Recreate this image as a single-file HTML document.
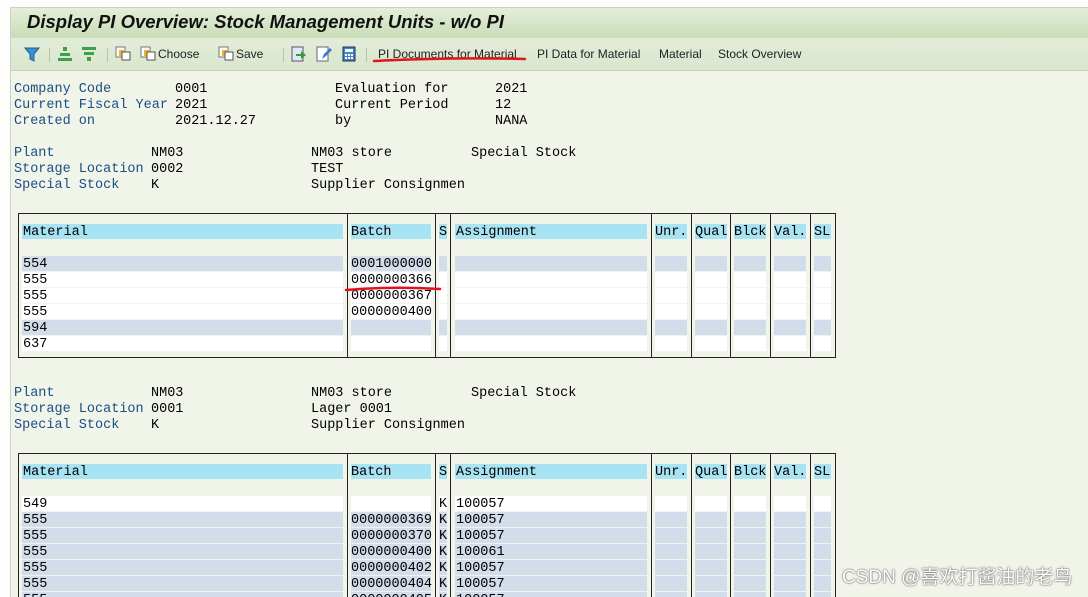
<!DOCTYPE html>
<html><head><meta charset="utf-8">
<style>
*{margin:0;padding:0;box-sizing:border-box}
html,body{width:1088px;height:597px;overflow:hidden}
body{background:#fdfefb;position:relative;font-family:"Liberation Mono",monospace;font-size:13.5px}
.a{position:absolute;white-space:pre;line-height:16px}
.l{color:#1b4d86}
#frame{position:absolute;left:10px;top:7px;width:1078px;height:590px;background:#f1f5e9;border-left:1px solid #c9d3bd;border-top:1px solid #c9d3bd}
#title{position:absolute;left:11px;top:8px;width:1077px;height:30px;background:linear-gradient(#e4eedb,#c9ddb7);font-family:"Liberation Sans",sans-serif;font-weight:bold;font-style:italic;font-size:18.5px;padding:3px 0 0 16px;color:#111}
#tb{position:absolute;left:11px;top:38px;width:1077px;height:33px;background:linear-gradient(#e3ecd9,#d9e6cd);border-bottom:1px solid #c5d0b8;font-family:"Liberation Sans",sans-serif;font-size:12px;color:#222}
#tb span{position:absolute;top:9px}
.sep{position:absolute;top:10px;width:1px;height:14px;background:#b9c4ab}
.tbl{position:absolute;left:18px;width:818px;border:1px solid #222;background:#f1f5e9}
.v{position:absolute;top:0;bottom:0;width:1px;background:#222}
.c{position:absolute;height:15px}
.h{background:#a7e3f2}
.s{background:#d3dcea}
.w{background:#fff}
</style></head><body>
<div id="frame"></div>
<div id="title">Display PI Overview: Stock Management Units - w/o PI</div>
<div id="tb">
<svg style="position:absolute;left:13px;top:8px" width="16" height="16"><path d="M1 2h14l-5 6v7l-4-2V8z" fill="#3b8fd0" stroke="#1f5f9a"/></svg>
<div class="sep" style="left:38px"></div>
<svg style="position:absolute;left:46px;top:8px" width="16" height="16"><rect x="6" y="1" width="4" height="4" fill="#3ea04a"/><rect x="3" y="7" width="10" height="3" fill="#3ea04a"/><rect x="1" y="12" width="14" height="3" fill="#3ea04a"/></svg>
<svg style="position:absolute;left:70px;top:8px" width="16" height="16"><rect x="1" y="1" width="14" height="3" fill="#3ea04a"/><rect x="3" y="6" width="10" height="3" fill="#3ea04a"/><rect x="6" y="11" width="4" height="4" fill="#3ea04a"/></svg>
<div class="sep" style="left:96px"></div>
<svg style="position:absolute;left:104px;top:8px" width="16" height="16"><rect x="1" y="1" width="9" height="10" fill="#fff" stroke="#777"/><rect x="4" y="4" width="6" height="6" fill="#f0b030"/><rect x="7" y="6" width="8" height="8" fill="#fff" stroke="#555"/></svg>
<svg style="position:absolute;left:129px;top:8px" width="16" height="16"><rect x="1" y="1" width="9" height="10" fill="#fff" stroke="#777"/><rect x="4" y="4" width="6" height="6" fill="#f0b030"/><rect x="7" y="6" width="8" height="8" fill="#fff" stroke="#555"/></svg>
<span style="left:147px">Choose</span>
<svg style="position:absolute;left:207px;top:8px" width="16" height="16"><rect x="1" y="1" width="9" height="10" fill="#fff" stroke="#777"/><rect x="4" y="4" width="6" height="6" fill="#f0b030"/><rect x="7" y="6" width="8" height="8" fill="#fff" stroke="#555"/></svg>
<span style="left:225px">Save</span>
<div class="sep" style="left:272px"></div>
<svg style="position:absolute;left:280px;top:8px" width="16" height="16"><rect x="1" y="1" width="11" height="14" fill="#dfe8f4" stroke="#557"/><path d="M5 8h5V5l5 4-5 4v-3H5z" fill="#3a9a3a"/></svg>
<svg style="position:absolute;left:305px;top:8px" width="16" height="16"><rect x="1" y="1" width="11" height="14" fill="#fff" stroke="#667"/><path d="M6 13l2-5 6-6 2 2-6 6z" fill="#3a7ad0"/></svg>
<svg style="position:absolute;left:330px;top:8px" width="16" height="16"><rect x="2" y="1" width="12" height="14" fill="#4a80c8" stroke="#235"/><rect x="4" y="3" width="8" height="3" fill="#dfe"/><g fill="#fff"><rect x="4" y="8" width="2" height="2"/><rect x="7" y="8" width="2" height="2"/><rect x="10" y="8" width="2" height="2"/><rect x="4" y="11" width="2" height="2"/><rect x="7" y="11" width="2" height="2"/><rect x="10" y="11" width="2" height="2"/></g></svg>
<div class="sep" style="left:355px"></div>
<span style="left:367px">PI Documents for Material</span>
<span style="left:526px">PI Data for Material</span>
<span style="left:648px">Material</span>
<span style="left:707px">Stock Overview</span>
</div>
<svg style="position:absolute;left:372px;top:55px" width="160" height="10"><path d="M2 6Q80 2 153 4" stroke="#e0141c" stroke-width="2.5" fill="none" stroke-linecap="round"/></svg>

<div class="a l" style="left:14px;top:82px">Company Code
Current Fiscal Year
Created on</div>
<div class="a" style="left:175px;top:82px">0001
2021
2021.12.27</div>
<div class="a" style="left:335px;top:82px">Evaluation for
Current Period
by</div>
<div class="a" style="left:495px;top:82px">2021
12
NANA</div>

<div class="a l" style="left:14px;top:146px">Plant
Storage Location
Special Stock</div>
<div class="a" style="left:151px;top:146px">NM03
0002
K</div>
<div class="a" style="left:311px;top:146px">NM03 store
TEST
Supplier Consignmen</div>
<div class="a" style="left:471px;top:146px">Special Stock</div>

<div class="a l" style="left:14px;top:386px">Plant
Storage Location
Special Stock</div>
<div class="a" style="left:151px;top:386px">NM03
0001
K</div>
<div class="a" style="left:311px;top:386px">NM03 store
Lager 0001
Supplier Consignmen</div>
<div class="a" style="left:471px;top:386px">Special Stock</div>

<div class="tbl" style="top:213px;height:145px">
<div class="v" style="left:328px"></div><div class="v" style="left:416px"></div><div class="v" style="left:431px"></div><div class="v" style="left:632px"></div><div class="v" style="left:672px"></div><div class="v" style="left:711px"></div><div class="v" style="left:751px"></div><div class="v" style="left:791px"></div>
</div>
<div class="tbl" style="top:453px;height:150px">
<div class="v" style="left:328px"></div><div class="v" style="left:416px"></div><div class="v" style="left:431px"></div><div class="v" style="left:632px"></div><div class="v" style="left:672px"></div><div class="v" style="left:711px"></div><div class="v" style="left:751px"></div><div class="v" style="left:791px"></div>
</div>

<div id="cells"></div>
<script>
var cols=[[22,321],[351,80],[439,8],[455,192],[655,32],[695,32],[734,32],[774,32],[814,17]];
var H=["Material","Batch","S","Assignment","Unr.","Qual","Blck","Val.","SL"];
var out="";
function row(y,cls,vals){cols.forEach(function(c,i){var t=vals?vals[i]||"":"";out+='<div class="c '+cls+'" style="left:'+c[0]+'px;top:'+y+'px;width:'+c[1]+'px"></div>';if(t)out+='<div class="a" style="left:'+(c[0]+(i==0||i==3?1:0))+'px;top:'+(y+1)+'px">'+t+'</div>';});}
row(224,"h",H);
var r1=[["s","554","0001000000"],["w","555","0000000366"],["w","555","0000000367"],["w","555","0000000400"],["s","594",""],["w","637",""]];
r1.forEach(function(r,k){row(256+16*k,r[0],[r[1],r[2]]);});
row(464,"h",H);
var r2=[["w","549","","K","100057"],["s","555","0000000369","K","100057"],["s","555","0000000370","K","100057"],["s","555","0000000400","K","100061"],["s","555","0000000402","K","100057"],["s","555","0000000404","K","100057"],["s","555","0000000405","K","100057"]];
r2.forEach(function(r,k){row(496+16*k,r[0],[r[1],r[2],r[3],r[4]]);});
document.getElementById("cells").innerHTML=out;
</script>
<svg style="position:absolute;left:344px;top:284px" width="100" height="10"><path d="M2 6Q50 2 96 5" stroke="#e0141c" stroke-width="2.5" fill="none" stroke-linecap="round"/></svg>
<div class="a" style="left:842px;top:568px;font-family:'Liberation Sans','Noto Sans CJK SC',sans-serif;font-size:19px;line-height:20px;color:#fff;text-shadow:0 0 2px #666,0 0 1px #444">CSDN @喜欢打酱油的老鸟</div>
</body></html>
